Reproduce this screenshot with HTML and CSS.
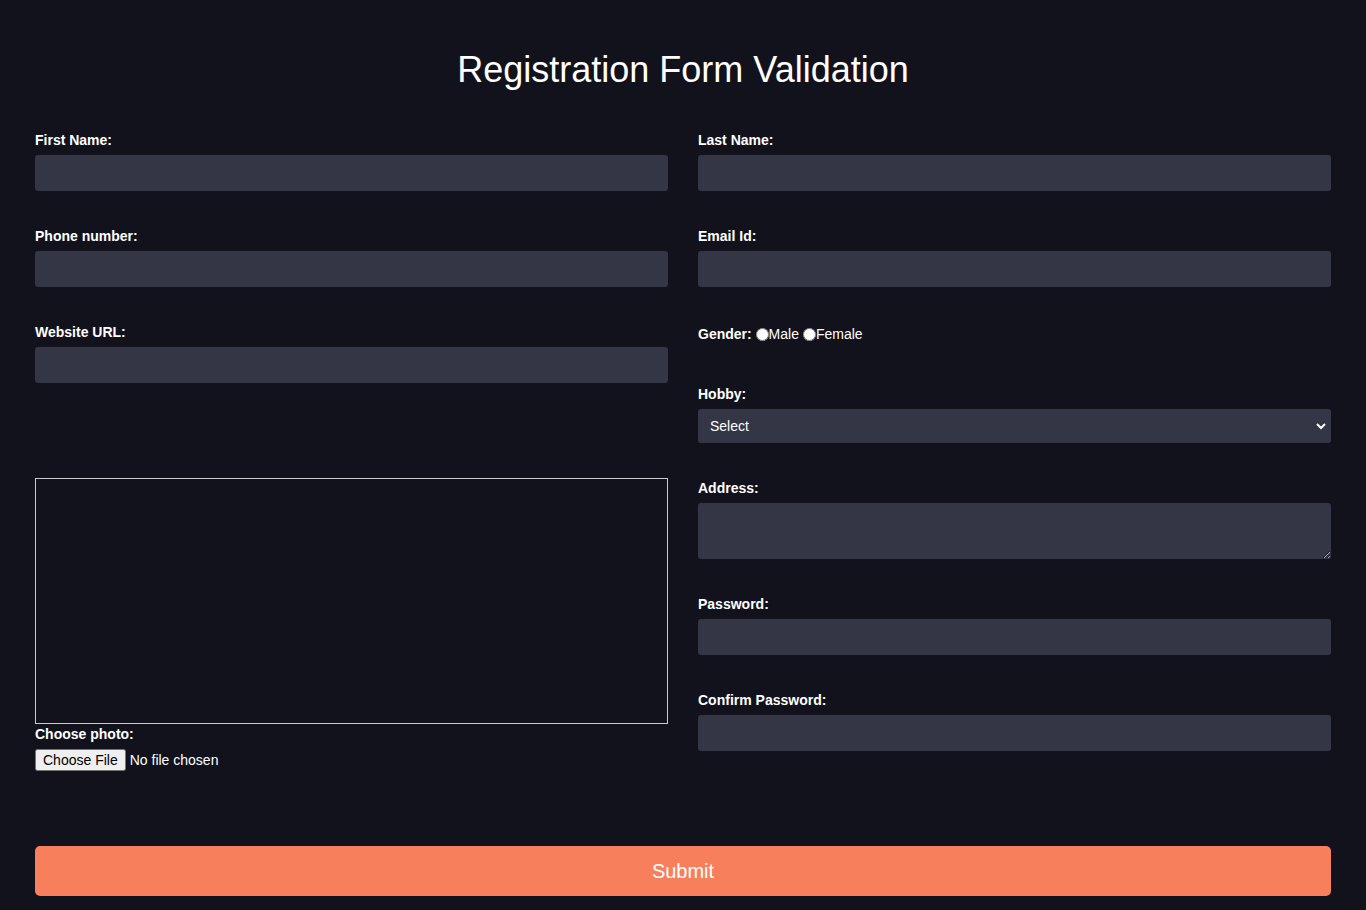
FILE: index.html
```html
<!DOCTYPE html>
<html lang="en">
<head>
<meta charset="utf-8">
<title>Registration Form Validation</title>
<link rel="stylesheet" href="styles.css">
</head>
<body>
<div class="page">
  <h1 class="title">Registration Form Validation</h1>
  <form class="form">
    <div class="grid">
      <div class="col">
        <div class="group">
          <label class="label">First Name:</label>
          <input class="field" type="text">
        </div>
        <div class="group">
          <label class="label">Phone number:</label>
          <input class="field" type="text">
        </div>
        <div class="group">
          <label class="label">Website URL:</label>
          <input class="field" type="text">
        </div>
        <div class="preview"></div>
        <label class="label photo-label">Choose photo:</label>
        <input class="file" type="file">
      </div>
      <div class="col">
        <div class="group">
          <label class="label">Last Name:</label>
          <input class="field" type="text">
        </div>
        <div class="group">
          <label class="label">Email Id:</label>
          <input class="field" type="text">
        </div>
        <div class="gender">
          <span class="label-inline">Gender: </span><input class="radio" type="radio" name="g"><span class="opt">Male</span><input class="radio" type="radio" name="g"><span>Female</span>
        </div>
        <div class="group">
          <label class="label">Hobby:</label>
          <div class="select-wrap">
            <select class="select">
              <option>Select</option>
            </select>
            <svg class="chev" width="10" height="8" viewBox="0 0 10 8"><path d="M1 2 L5 6 L9 2" fill="none" stroke="#fff" stroke-width="2"/></svg>
          </div>
        </div>
        <div class="group">
          <label class="label">Address:</label>
          <textarea class="area"></textarea>
        </div>
        <div class="group">
          <label class="label">Password:</label>
          <input class="field" type="password">
        </div>
        <div class="group last">
          <label class="label">Confirm Password:</label>
          <input class="field" type="password">
        </div>
      </div>
    </div>
    <button class="submit" type="button">Submit</button>
  </form>
</div>
</body>
</html>
```
FILE: styles.css
```css
html, body {
  margin: 0;
  padding: 0;
  background: #12121c;
}
body {
  font-family: "Liberation Sans", Arial, sans-serif;
  color: #ffffff;
}
.page {
  padding: 0 35px;
}
.title {
  margin: 50px 0 42px;
  font-size: 36px;
  line-height: 40px;
  font-weight: normal;
  text-align: center;
  color: #ffffff;
}
.grid {
  display: grid;
  grid-template-columns: 1fr 1fr;
  column-gap: 30px;
  align-items: start;
}
.col {
  display: flex;
  flex-direction: column;
}
.group {
  display: flex;
  flex-direction: column;
  margin-bottom: 37px;
}
.group.last {
  margin-bottom: 0;
}
.label {
  display: block;
  font-size: 14px;
  line-height: 16px;
  font-weight: bold;
  margin-bottom: 7px;
}
.field {
  height: 36px;
  box-sizing: border-box;
  border: none;
  border-radius: 3px;
  background: #343646;
  color: #fff;
  padding: 0 12px;
  font-family: inherit;
  font-size: 14px;
}
.preview {
  margin-top: 58px;
  height: 246px;
  box-sizing: border-box;
  border: 1px solid #c9c9cf;
}
.photo-label {
  margin-top: 2px;
}
.file {
  color: #fff;
  font-family: "Liberation Sans", Arial, sans-serif;
  font-size: 14px;
  height: 22px;
}
.gender {
  box-sizing: border-box;
  height: 20px;
  padding-top: 0;
  margin-bottom: 42px;
  font-size: 14px;
  line-height: 16px;
  display: flex;
  align-items: center;
}
.label-inline {
  font-weight: bold;
  white-space: pre;
}
.radio {
  margin: 0;
  width: 13px;
  height: 13px;
}
.opt {
  margin-right: 4px;
}
.select-wrap {
  position: relative;
}
.select {
  width: 100%;
  height: 34px;
  border: none;
  border-radius: 3px;
  background: #343646;
  color: #fff;
  font-family: inherit;
  font-size: 14px;
  padding: 0 12px;
  appearance: none;
  -webkit-appearance: none;
}
.chev {
  position: absolute;
  right: 5px;
  top: 13px;
  pointer-events: none;
}
.area {
  height: 56px;
  box-sizing: border-box;
  border: none;
  border-radius: 3px;
  background: #343646;
  color: #fff;
  resize: vertical;
  font-family: inherit;
}
.submit {
  display: block;
  width: 100%;
  margin-top: 75px;
  height: 50px;
  border: none;
  border-radius: 5px;
  background: #f87f5c;
  color: #fff;
  font-family: "Liberation Sans", Arial, sans-serif;
  font-size: 20px;
}
```
